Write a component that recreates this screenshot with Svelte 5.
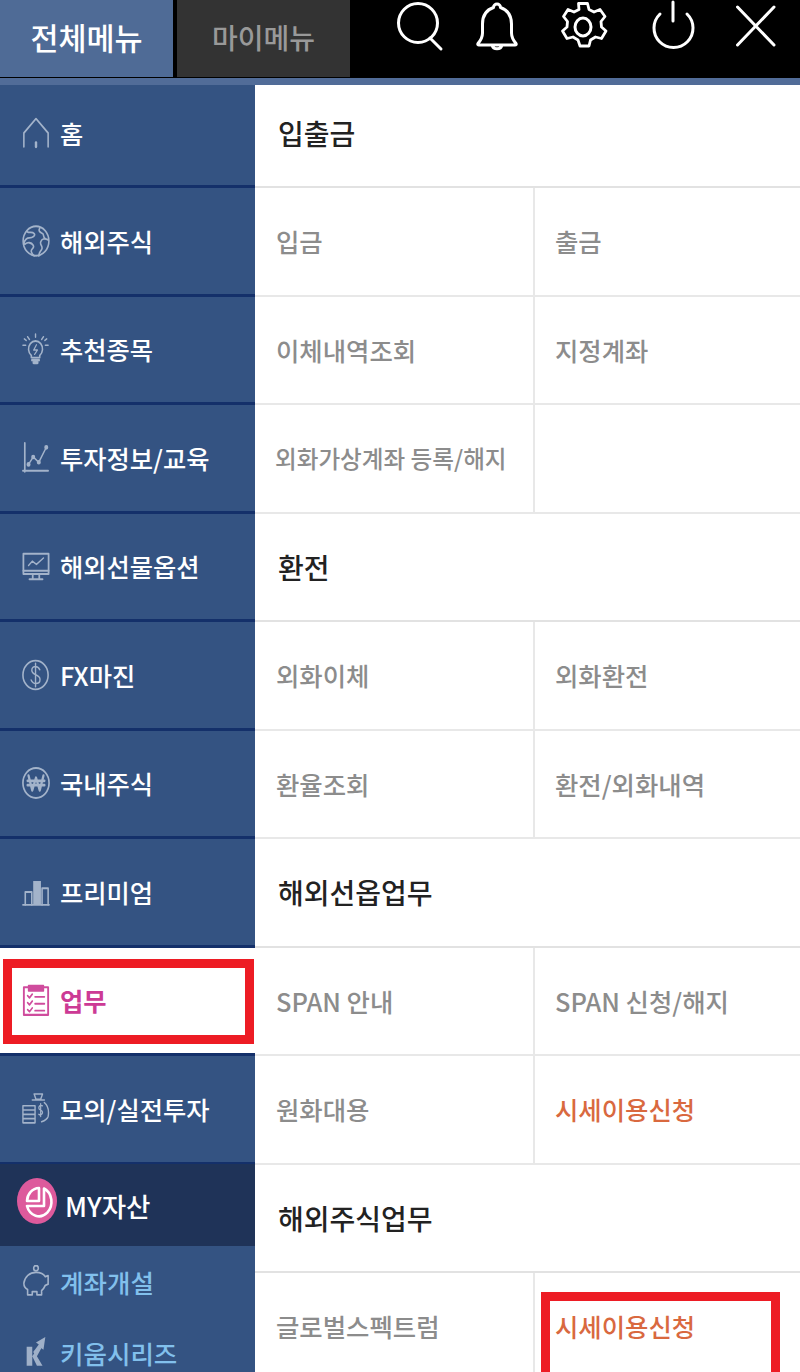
<script>
  const sideItems = [
    { label: '홈', icon: 'home' },
    { label: '해외주식', icon: 'globe' },
    { label: '추천종목', icon: 'bulb' },
    { label: '투자정보/교육', icon: 'chart' },
    { label: '해외선물옵션', icon: 'monitor' },
    { label: 'FX마진', icon: 'dollar' },
    { label: '국내주식', icon: 'won' },
    { label: '프리미엄', icon: 'bars' },
    { label: '업무', icon: 'list', active: true },
    { label: '모의/실전투자', icon: 'bag' }
  ]

  const rows = [
    { title: '입출금' },
    { cells: ['입금', '출금'] },
    { cells: ['이체내역조회', '지정계좌'] },
    { cells: ['외화가상계좌 등록/해지', ''], small: true },
    { title: '환전' },
    { cells: ['외화이체', '외화환전'] },
    { cells: ['환율조회', '환전/외화내역'] },
    { title: '해외선옵업무' },
    { cells: ['SPAN 안내', 'SPAN 신청/해지'] },
    { cells: ['원화대용', '시세이용신청'], hot: true },
    { title: '해외주식업무' },
    { cells: ['글로벌스펙트럼', '시세이용신청'], hot: true }
  ]
</script>

{#snippet icon(name)}
  <svg class="icon" viewBox="0 0 30 30" preserveAspectRatio="none" fill="none" stroke="currentColor" stroke-width="1.700" stroke-linecap="round" stroke-linejoin="round">
    {#if name === 'home'}
      <path d="M2 28V15L15 1.500L28 15V28" />
      <path d="M15 24V28" stroke-width="2.600" />
    {:else if name === 'globe'}
      <circle cx="15" cy="15" r="13.800" />
      <path d="M5 6c3 2 6 0 8 2s-2 4-5 4-5 2-6 5M19 3c-2 3 1 4 3 5s0 3 3 5M28 14c-4-2-7-1-8 2s3 4 1 7-3 3-3 6M3 18c3-2 7-2 9 1s-3 3-2 6 2 3 3 4" />
    {:else if name === 'bulb'}
      <path d="M10 21a7.500 7.500 0 1 1 9 0v2h-9z" />
      <path d="M11 25.500h7M12.500 28h4" stroke-width="2.600" />
      <path d="M15.500 11l-3 5h4l-3 4" stroke-width="1.300" />
      <path d="M14.500 1v3M6 3.500l2 2.500M23 3.500l-2 2.500M1 11.500h3M25 11.500h3M2.500 5.500l2 1.500M26.500 5.500l-2 1.500" stroke-width="1.500" />
    {:else if name === 'chart'}
      <path d="M3 1V28M1 27H28" stroke-width="1.800" />
      <path d="M7 21L12 14L18 19L26 5" stroke-width="1.500" />
      <circle cx="7" cy="21" r="1.300" fill="currentColor" />
      <circle cx="12" cy="14" r="1.300" fill="currentColor" />
      <circle cx="18" cy="19" r="1.300" fill="currentColor" />
      <circle cx="26" cy="5" r="1.300" fill="currentColor" />
    {:else if name === 'monitor'}
      <path d="M1.500 3.500H28.500V22.500H1.500Z" stroke-width="1.900" />
      <path d="M1.500 19.500H28.500M11.500 22.500V27M18.500 22.500V27M8 27.500H22" stroke-width="1.900" />
      <path d="M7 14.500L11 10.500L15.500 13.500L23 7.500" stroke-width="1.500" />
    {:else if name === 'dollar'}
      <circle cx="14.500" cy="15" r="13.500" />
      <path d="M19 10c-1-2-2.500-3-4.500-3s-4 1.300-4 3.600c0 5 8.800 3.500 8.800 8.600 0 2.500-2 3.800-4.500 3.800s-4-1.300-5-3.300M14.500 4v22" stroke-width="1.500" />
    {:else if name === 'won'}
      <circle cx="15" cy="15" r="14" stroke-width="1.800" />
      <path d="M7 8l4 14 4-12 4 12 4-14M6 13h18M6 17h18" stroke-width="2.400" />
    {:else if name === 'bars'}
      <path d="M1 27H29" stroke-width="1.700" />
      <path d="M3.500 27V15H10.500V27" />
      <rect x="12" y="4.700" width="8.300" height="22.300" fill="currentColor" stroke="none" />
      <path d="M21.500 27V11.500H28V27" />
    {:else if name === 'list'}
      <path d="M2 3H28V29H2Z" stroke-width="2" />
      <path d="M7 1.500H23V6.500H7Z" stroke-width="1.500" fill="currentColor" />
      <path d="M6 11l2 2 3-3.500M6 17.500l2 2 3-3.500M6 24l2 2 3-3.500M14 12h10M14 18.500h10M14 25h10" stroke-width="1.700" />
    {:else if name === 'bag'}
      <path d="M1 12h13M1 16h13M1 20h13M1 24h13M1 28h13M1 12v16M14 12v16" stroke-width="1.500" />
      <path d="M13 1h9l-2 5h-5zM11 6.500h13M24 9c4 3 5 8 4 13-1 3-4 4-7 5" stroke-width="1.500" />
      <path d="M22 12c-2-1-4 0-4 2s4 2 4 4-2 3-4 2M20 10v12" stroke-width="1.300" />
    {/if}
  </svg>
{/snippet}

<div class="page">
  <header class="top">
    <div class="tab on">전체메뉴</div>
    <div class="tab">마이메뉴</div>
    <svg class="tools" viewBox="0 0 450 77" fill="none" stroke="#fff" stroke-width="3" stroke-linecap="round" stroke-linejoin="round">
      <circle cx="68" cy="23" r="19.500" />
      <path d="M80 38L91 49" />
      <path d="M143.500 7.500C136 10 132.500 16 132.500 24v9c0 4-1.500 7-4.500 10.500c-.5 1 0 1.500 1 1.500h36c1 0 1.500-.5 1-1.500c-3-3.500-4.500-6.500-4.500-10.500v-9c0-8-3.500-14-11-16.500a3.500 3.500 0 1 0-7 0zM142 45a5.200 5.200 0 0 0 10 0" />
      <ellipse cx="233" cy="27" rx="8" ry="9" />
      <path d="M228.500 3.500h9l1.500 6 5 2.500 6-2.500 5 7-4 5 .5 5.500 4.500 4-4.500 7.500-6-1.500-5 3-1.500 6h-9l-2-6-5-3-6 1.500-4.500-7.500 4.500-4 .5-5.500-4-5 4.500-7 6 2.500 5-2.500z" stroke-width="2.800" />
      <path d="M323 2V21" />
      <path d="M310 14a19.500 19.500 0 1 0 27 0" />
      <path d="M387.500 7L424 45M424 7L387.500 45" />
    </svg>
  </header>
  <div class="stripe"></div>

  <div class="body">
    <nav class="side">
      {#each sideItems as item, i}
        <div class="item" class:first={i === 0} class:active={item.active}>
          {@render icon(item.icon)}
          <span>{item.label}</span>
        </div>
      {/each}
      <div class="my">
        <span class="pie">
          <svg viewBox="0 0 40 46" fill="none" stroke="#fff" stroke-width="2.600" stroke-linejoin="round">
            <path d="M10 23A12.500 13.500 0 0 1 22 10V23Z" />
            <path d="M27 10.500A12.500 14.500 0 1 1 10 28H27Z" />
          </svg>
        </span>
        <span>MY자산</span>
      </div>
      <div class="sub">
        <svg class="icon" viewBox="0 0 30 30" preserveAspectRatio="none" fill="none" stroke="currentColor" stroke-width="1.700" stroke-linejoin="round">
          <path d="M2 17c1-6 6-10 13-10 5 0 8 1 10 4l3-1v8l-3 1c-1 2-2 4-4 5v4h-5v-3h-5v3H6v-5c-2-1-4-3-4-6z" />
          <circle cx="15" cy="3" r="2.500" />
        </svg>
        <span>계좌개설</span>
      </div>
      <div class="sub">
        <svg class="icon" viewBox="0 0 30 30" preserveAspectRatio="none">
          <path fill="#9fb0c8" d="M5 10H11V28H5ZM11 19L17 11H21L16 19L22 28H16Z" />
          <path fill="#9fb0c8" d="M12 15L18 8L15 6L25 1L23 13L20 11L15 19Z" />
        </svg>
        <span>키움시리즈</span>
      </div>
    </nav>

    <main class="menu">
      {#each rows as row}
        {#if row.title}
          <div class="title">{row.title}</div>
        {:else}
          <div class="row">
            <div class="cell" class:small={row.small}>{row.cells[0]}</div>
            <div class="cell" class:hot={row.hot}>{row.cells[1]}</div>
          </div>
        {/if}
      {/each}
    </main>
  </div>

  <div class="mark mark-side"></div>
  <div class="mark mark-cell"></div>
</div>

<style>
  :global(body) {
    margin: 0;
    background: #fff;
  }

  .page {
    position: relative;
    width: 800px;
    height: 1372px;
    overflow: hidden;
    font-family: 'Noto Sans CJK KR', 'Noto Sans', sans-serif;
  }

  .top {
    display: flex;
    height: 78px;
    background: #000;
  }

  .tab {
    display: flex;
    align-items: center;
    justify-content: center;
    box-sizing: border-box;
    width: 173px;
    height: 77px;
    margin-left: 4px;
    padding-bottom: 4px;
    background: #333;
    color: #999;
    font-size: 28px;
    font-weight: 500;
  }

  .tab.on {
    margin-left: 0;
    background: #4f6b96;
    color: #fff;
    font-size: 30.500px;
  }

  .tools {
    width: 450px;
    height: 77px;
  }

  .stripe {
    height: 7px;
    background: #516c98;
  }

  .body {
    display: flex;
  }

  .side {
    flex: 0 0 255px;
    background: #345382;
  }

  .item {
    display: flex;
    align-items: center;
    gap: 10px;
    box-sizing: border-box;
    height: 108.500px;
    padding-left: 22px;
    border-bottom: 3px solid #14306a;
    color: #fff;
    font-size: 25.300px;
    font-weight: 500;
  }

  .item.first {
    height: 103px;
    padding-bottom: 4px;
  }

  .item.active {
    background: #fff;
    color: #cc3a95;
    font-weight: 700;
  }

  .icon {
    flex: none;
    width: 28px;
    height: 32px;
    color: #a3b3ca;
  }

  .item.active .icon {
    color: #cf4c9d;
  }

  .my {
    display: flex;
    align-items: flex-start;
    gap: 8px;
    box-sizing: border-box;
    height: 82px;
    margin-top: -1px;
    padding: 14px 0 0 17px;
    background: #1f3358;
    color: #fff;
    font-size: 26.500px;
    font-weight: 500;
    line-height: 56px;
  }

  .pie {
    display: flex;
    width: 40px;
    height: 46px;
    border-radius: 50%;
    background: #dd5a9c;
  }

  .sub {
    display: flex;
    align-items: center;
    gap: 10px;
    height: 71px;
    padding-left: 22px;
    color: #82c0ec;
    font-size: 25.500px;
    font-weight: 500;
  }

  .menu {
    flex: 1;
  }

  .title {
    display: flex;
    align-items: center;
    box-sizing: border-box;
    height: 108.500px;
    padding-left: 23px;
    border-bottom: 2px solid #e2e2e2;
    color: #222;
    font-size: 28px;
    font-weight: 500;
  }

  .title:first-child {
    height: 103px;
    padding-bottom: 6px;
  }

  .row {
    display: flex;
    box-sizing: border-box;
    height: 108.500px;
    border-bottom: 2px solid #e8e8e8;
  }

  .cell {
    display: flex;
    flex: 0 0 265px;
    align-items: center;
    padding-left: 20px;
    color: #8c8c8c;
    font-size: 25.400px;
    font-weight: 500;
    white-space: nowrap;
  }

  .cell:first-child {
    flex: 0 0 280px;
    box-sizing: border-box;
    padding-left: 21px;
    border-right: 2px solid #e8e8e8;
  }

  .cell.small {
    padding-left: 20px;
    font-size: 23.600px;
  }

  .cell.hot {
    color: #d9693f;
  }

  .mark {
    position: absolute;
    box-sizing: border-box;
    border: 9.500px solid #ed1c24;
  }

  .mark-side {
    top: 959px;
    left: 3px;
    width: 251px;
    height: 85px;
  }

  .mark-cell {
    top: 1292px;
    left: 541px;
    width: 239px;
    height: 100px;
  }
</style>
